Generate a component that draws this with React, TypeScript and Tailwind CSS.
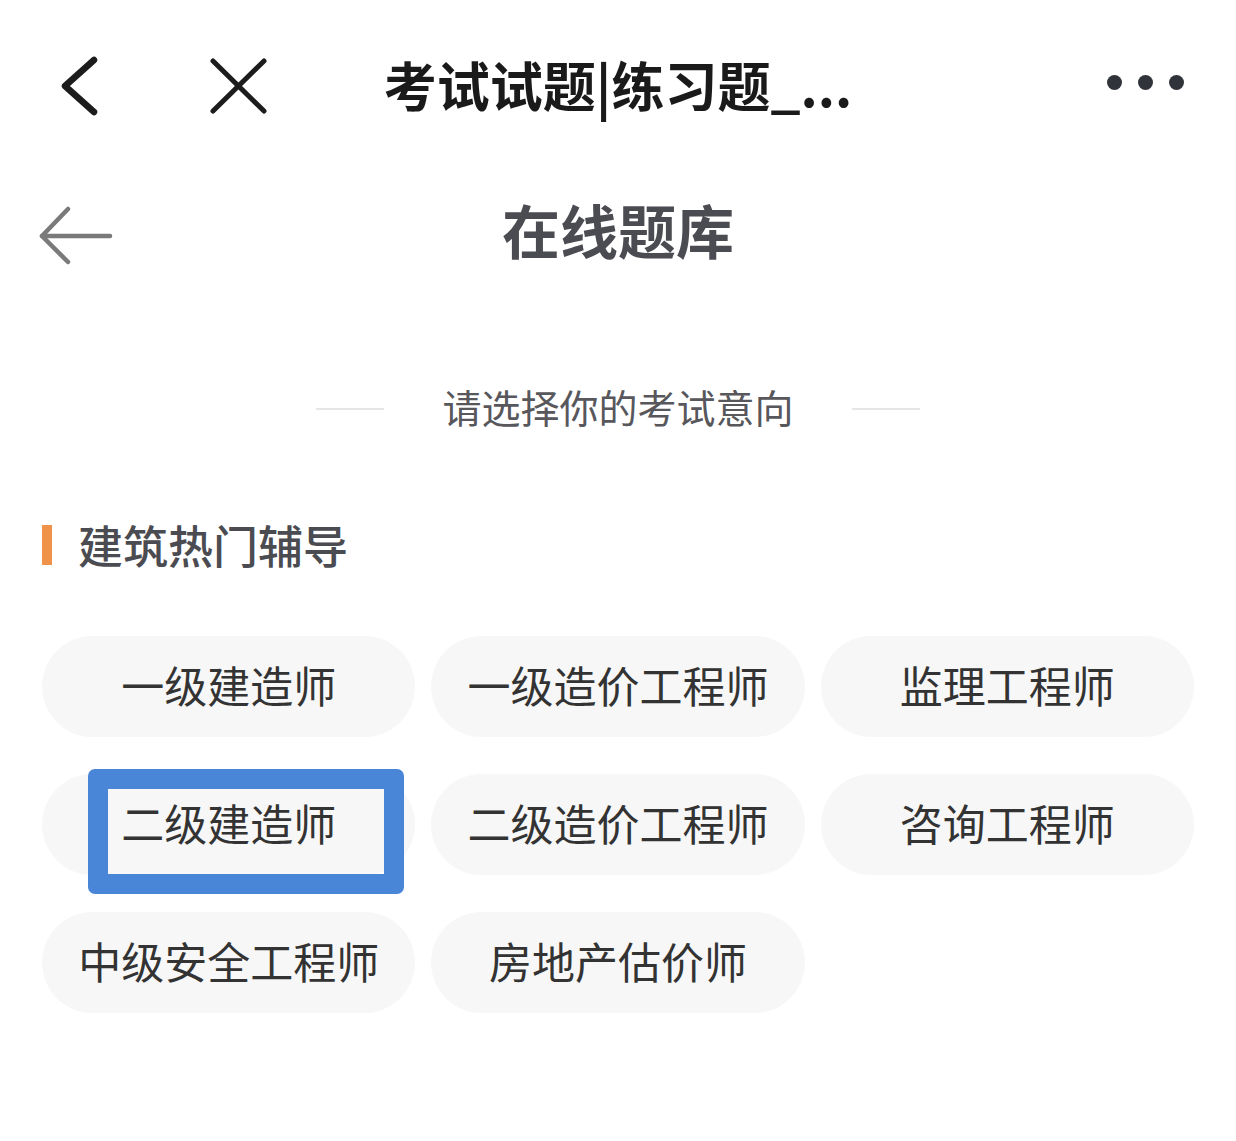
import React from "react";

const items = [
  "一级建造师",
  "一级造价工程师",
  "监理工程师",
  "二级建造师",
  "二级造价工程师",
  "咨询工程师",
  "中级安全工程师",
  "房地产估价师",
];

export default function App() {
  return (
    <div
      className="w-[1236px] h-[1141px] bg-white overflow-hidden"
      style={{ fontFamily: '"Noto Sans CJK SC", "Noto Sans", sans-serif' }}
    >
      {/* top bar */}
      <div className="h-[165px] grid grid-cols-[1fr_auto_1fr] items-center">
        <div className="flex items-center">
          <svg width="300" height="80" viewBox="0 40 300 80" className="block">
            <polyline
              points="94,57 65,83 94,109"
              fill="none"
              stroke="#1c1c1c"
              strokeWidth="6.5"
              strokeLinecap="round"
              strokeLinejoin="round"
            />
            <line x1="213" y1="58" x2="264" y2="108" stroke="#1c1c1c" strokeWidth="5" strokeLinecap="round" />
            <line x1="264" y1="58" x2="213" y2="108" stroke="#1c1c1c" strokeWidth="5" strokeLinecap="round" />
          </svg>
        </div>
        <div className="text-[53px] font-semibold text-[#1a1a1a] leading-none pt-[4px]">
          考试试题|练习题_...
        </div>
        <div className="flex justify-end pr-[52px]">
          <div className="flex gap-[16px]">
            <span className="w-[15px] h-[15px] rounded-full bg-[#30343a]" />
            <span className="w-[15px] h-[15px] rounded-full bg-[#30343a]" />
            <span className="w-[15px] h-[15px] rounded-full bg-[#30343a]" />
          </div>
        </div>
      </div>

      {/* second header */}
      <div className="h-[136px] grid grid-cols-[1fr_auto_1fr] items-center">
        <div className="pl-[38px] pt-[6px]">
          <svg width="76" height="60" viewBox="38 206 76 60" className="block">
            <line x1="42" y1="236" x2="110" y2="236" stroke="#7a7a7a" strokeWidth="4.5" strokeLinecap="round" />
            <polyline
              points="68,209 42,236 68,262"
              fill="none"
              stroke="#7a7a7a"
              strokeWidth="4.5"
              strokeLinecap="round"
              strokeLinejoin="round"
            />
          </svg>
        </div>
        <div className="text-[58px] font-semibold text-[#4b4b52] leading-none pb-[8px]">在线题库</div>
        <div />
      </div>

      {/* subtitle */}
      <div className="mt-[86px] flex items-center justify-center gap-[58px]">
        <div className="w-[68px] h-[2px] bg-[#e6e6e6] mt-[4px]" />
        <div className="text-[39px] text-[#57575c] leading-none">请选择你的考试意向</div>
        <div className="w-[68px] h-[2px] bg-[#e6e6e6] mt-[4px]" />
      </div>

      {/* section header */}
      <div className="mt-[96px] pl-[42px] flex items-center gap-[26px]">
        <div className="w-[10px] h-[40px] bg-[#f0924a]" />
        <div className="text-[45px] font-medium text-[#4b4b52] leading-none">建筑热门辅导</div>
      </div>

      {/* grid */}
      <div className="mt-[69px] px-[42px] grid grid-cols-3 gap-x-[16px] gap-y-[37px]">
        {items.map((t, i) => (
          <div
            key={t}
            className="relative h-[101px] rounded-full bg-[#f7f7f7] flex items-center justify-center text-[43px] text-[#333333] leading-none pb-[4px]"
          >
            {t}
            {i === 3 && (
              <div className="absolute left-[46px] top-[-5px] w-[316px] h-[125px] rounded-[7px] border-[20px] border-[#4a86d8]" />
            )}
          </div>
        ))}
      </div>
    </div>
  );
}
